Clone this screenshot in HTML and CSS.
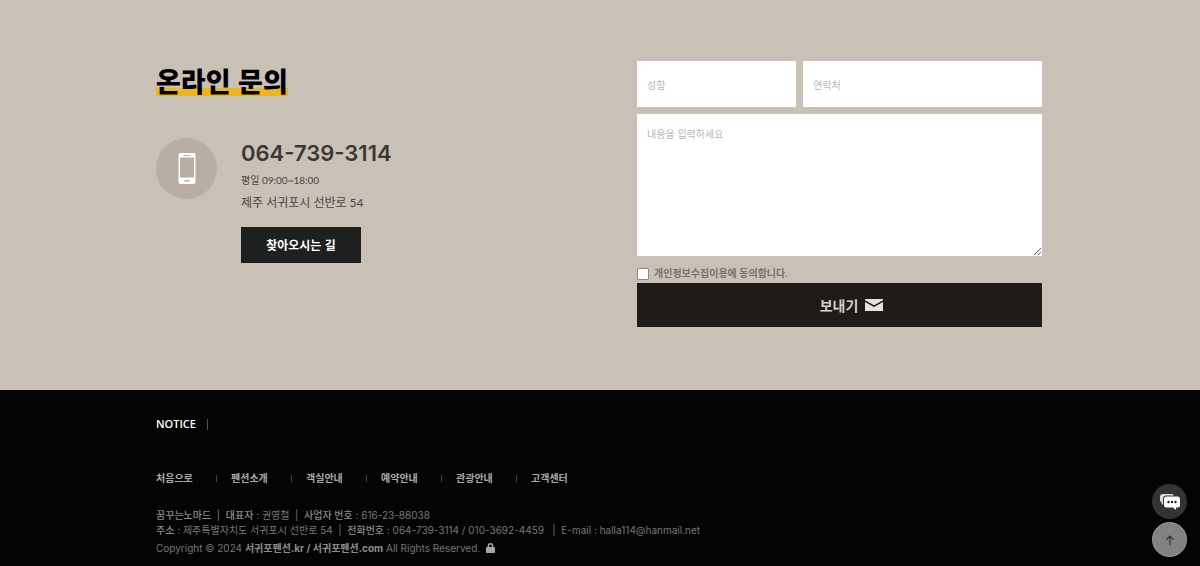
FILE: index.html
```
<!DOCTYPE html>
<html lang="ko">
<head>
    <meta charset="UTF-8">
    <meta name="viewport" content="width=device-width, initial-scale=1.0">
    <title>온라인 문의</title>
    <link rel="stylesheet" href="styles.css">
</head>
<body>
    <section class="contact">
        <div class="container contact-inner">
            <div class="contact-info">
                <h2><span class="marker">온라인 문의</span></h2>
                <div class="info-row">
                    <div class="phone-circle">
                        <svg width="18" height="31" viewBox="0 0 18 31">
                            <path fill="#fff" fill-rule="evenodd" d="M2.500 0h13a2 2 0 0 1 2 2v27a2 2 0 0 1-2 2h-13a2 2 0 0 1-2-2V2a2 2 0 0 1 2-2zM2 4.500v20h14v-20zM5.500 2v1h7V2zM6.500 27v1.500h5V27z"/>
                        </svg>
                    </div>
                    <div class="info-text">
                        <strong class="phone">064-739-3114</strong>
                        <p class="hours">평일 09:00~18:00</p>
                        <p class="address">제주 서귀포시 선반로 54</p>
                        <a href="#" class="map-btn">찾아오시는 길</a>
                    </div>
                </div>
            </div>

            <form class="contact-form" id="contactForm">
                <div class="field-row">
                    <input type="text" class="field name" placeholder="성함" aria-label="성함">
                    <input type="text" class="field tel" placeholder="연락처" aria-label="연락처">
                </div>
                <textarea class="field message" placeholder="내용을 입력하세요" aria-label="내용"></textarea>
                <div class="agree">
                    <input type="checkbox" id="agree">
                    <label for="agree">개인정보수집이용에 동의합니다.</label>
                </div>
                <button type="submit" class="send-btn">
                    보내기
                    <svg width="18" height="12" viewBox="0 0 18 12">
                        <path fill="#e6e3dc" d="M0 0h18v1.200L9 6.200 0 1.200zM0 3l9 5 9-5v9H0z"/>
                    </svg>
                </button>
            </form>
        </div>
    </section>

    <footer class="footer">
        <div class="container">
            <div class="notice">NOTICE</div>
            <nav class="footer-nav">
                <a href="#">처음으로</a>
                <a href="#">펜션소개</a>
                <a href="#">객실안내</a>
                <a href="#">예약안내</a>
                <a href="#">관광안내</a>
                <a href="#">고객센터</a>
            </nav>
            <div class="company">
                <p><b>꿈꾸는노마드</b> &nbsp;|&nbsp; <b>대표자</b> : 권영철 &nbsp;|&nbsp; <b>사업자 번호</b> : 616-23-88038</p>
                <p><b>주소</b> : 제주특별자치도 서귀포시 선반로 54 &nbsp;|&nbsp; <b>전화번호</b> : 064-739-3114 / 010-3692-4459 &nbsp; |&nbsp; E-mail : halla114@hanmail.net</p>
                <p class="copyright">Copyright © 2024 <strong>서귀포펜션.kr / 서귀포펜션.com</strong> All Rights Reserved.
                    <svg class="lock" width="9" height="10" viewBox="0 0 9 10">
                        <path fill="none" stroke="#a5a7ad" stroke-width="1.400" d="M2.300 5V3a2.200 2.200 0 0 1 4.400 0v2"/>
                        <rect y="4" width="9" height="6" rx="1" fill="#a5a7ad"/>
                    </svg>
                </p>
            </div>
        </div>
    </footer>

    <div class="floating">
        <button type="button" class="chat-btn" aria-label="채팅">
            <svg width="20" height="16" viewBox="0 0 20 16">
                <path fill="#ddd" d="M3 0h9a2 2 0 0 1 2 1.500H6A3.500 3.500 0 0 0 3 5v6L1.500 9.500V8A2 2 0 0 1 0 6V3a3 3 0 0 1 3-3z"/>
                <path fill="#fff" d="M6.500 2.500h11A2.500 2.500 0 0 1 20 5v6a2.500 2.500 0 0 1-2.500 2.500H16V16l-3-2.500H6.500A2.500 2.500 0 0 1 4 11V5a2.500 2.500 0 0 1 2.500-2.500z"/>
                <circle cx="8.500" cy="8" r="1.200" fill="#222"/>
                <circle cx="12" cy="8" r="1.200" fill="#222"/>
                <circle cx="15.500" cy="8" r="1.200" fill="#222"/>
            </svg>
        </button>
        <button type="button" class="top-btn" aria-label="위로">
            <svg width="8" height="10" viewBox="0 0 8 10">
                <path fill="none" stroke="#333" stroke-width="1.200" d="M4 10V1M.500 4.500L4 1l3.500 3.500"/>
            </svg>
        </button>
    </div>

    <script>
        document.getElementById("contactForm").addEventListener("submit", function (event) {
            event.preventDefault();
            if (!document.getElementById("agree").checked) {
                alert("개인정보수집이용에 동의해 주세요.");
            }
        });

        document.querySelector(".top-btn").addEventListener("click", function () {
            window.scrollTo({ top: 0, behavior: "smooth" });
        });
    </script>
</body>
</html>
```
FILE: styles.css
```
* {
    box-sizing: border-box;
}

body {
    margin: 0;
    background-color: #040404;
    font-family: "Lato", "Noto Sans CJK KR", sans-serif;
    font-size: 10px;
}

h2, p {
    margin: 0;
}

a {
    text-decoration: none;
}

svg {
    flex: none;
}

.container {
    max-width: 928px;
    margin: 0 auto;
    padding: 0 22px 0 20px;
}

/* contact */
.contact {
    background-color: #cac1b6;
    padding: 61px 0 63px;
}

.contact-inner {
    display: flex;
    justify-content: space-between;
    gap: 20px;
}

.contact-info h2 {
    font-family: "Noto Sans CJK KR", sans-serif;
    font-size: 27px;
    font-weight: 900;
    line-height: 40px;
    color: #000;
}

.marker {
    background: linear-gradient(#edb621, #edb621) no-repeat 0 27px / 100% 8px;
}

.info-row {
    display: flex;
    gap: 24px;
    margin-top: 37px;
}

.phone-circle {
    display: flex;
    align-items: center;
    justify-content: center;
    width: 61px;
    height: 61px;
    border-radius: 50%;
    background-color: #b8aea1;
}

.phone {
    display: block;
    font-family: "Inter", sans-serif;
    font-size: 22px;
    font-weight: 600;
    line-height: 30px;
    color: #3b3833;
}

.hours {
    font-size: 10px;
    line-height: 25px;
    color: #4b4742;
}

.address {
    font-size: 12px;
    line-height: 20px;
    color: #4b4742;
}

.map-btn {
    display: block;
    width: 120px;
    margin-top: 14px;
    background-color: #1d201f;
    font-family: "Noto Sans CJK KR", sans-serif;
    font-size: 12px;
    font-weight: 700;
    line-height: 36px;
    text-align: center;
    color: #fff;
}

/* form */
.contact-form {
    width: 405px;
}

.field-row {
    display: grid;
    grid-template-columns: 2fr 3fr;
    gap: 7px;
    margin-bottom: 7px;
}

.field {
    width: 100%;
    border: none;
    border-radius: 0;
    padding: 0 10px;
    background-color: #fff;
    font-family: "Noto Sans CJK KR", sans-serif;
    font-size: 10px;
    color: #333;
}

.field::placeholder {
    color: #b7b7b5;
}

.name, .tel {
    height: 46px;
}

.message {
    display: block;
    height: 142px;
    padding: 12px 10px;
}

.agree {
    display: flex;
    align-items: center;
    gap: 5px;
    padding-top: 8px;
    line-height: 19px;
}

.agree input {
    appearance: none;
    width: 12px;
    height: 12px;
    margin: 0;
    border: 1px solid #888;
    border-radius: 1px;
    background-color: #fff;
}

.agree input:checked {
    background-color: #1f1c17;
}

.agree label {
    font-weight: 700;
    color: #77716a;
}

.send-btn {
    display: flex;
    align-items: center;
    justify-content: center;
    gap: 7px;
    width: 100%;
    height: 44px;
    padding: 0 0 0 24px;
    border: none;
    background-color: #1f1c17;
    font-family: "Noto Sans CJK KR", sans-serif;
    font-size: 14px;
    font-weight: 700;
    color: #d5d1ca;
    cursor: pointer;
}

/* footer */
.footer {
    background-color: #040404;
    padding: 24px 0 8px;
    color: #777;
}

.notice {
    display: flex;
    align-items: center;
    gap: 11px;
    font-family: "Open Sans", sans-serif;
    font-size: 11px;
    font-weight: 600;
    line-height: 20px;
    color: #fff;
}

.notice::after {
    content: "";
    width: 1px;
    height: 11px;
    background-color: #555;
}

.footer-nav {
    display: flex;
    margin-top: 34px;
    line-height: 20px;
}

.footer-nav a {
    display: flex;
    align-items: center;
    width: 75px;
    font-weight: 700;
    color: #aaa;
}

.footer-nav a:not(:last-child)::after {
    content: "";
    width: 1px;
    height: 7px;
    margin: 0 14px 0 auto;
    background-color: #444;
}

.company {
    margin-top: 20px;
    font-family: "Inter", "Noto Sans CJK KR", sans-serif;
    line-height: 15px;
}

.company b {
    font-weight: 500;
    color: #8c8c8c;
}

.copyright {
    margin-top: 3px;
}

.copyright strong {
    color: #8c8c8c;
}

.lock {
    margin-left: 3px;
    vertical-align: -1px;
}

/* floating buttons */
.floating {
    position: fixed;
    right: 13px;
    bottom: 9px;
    display: flex;
    flex-direction: column;
    gap: 3px;
}

.floating button {
    display: flex;
    align-items: center;
    justify-content: center;
    width: 35px;
    height: 35px;
    padding: 0;
    border: none;
    border-radius: 50%;
    background-color: #333;
    cursor: pointer;
}

.floating .top-btn {
    border: 1px solid #999;
    background-color: #828282;
}
```
